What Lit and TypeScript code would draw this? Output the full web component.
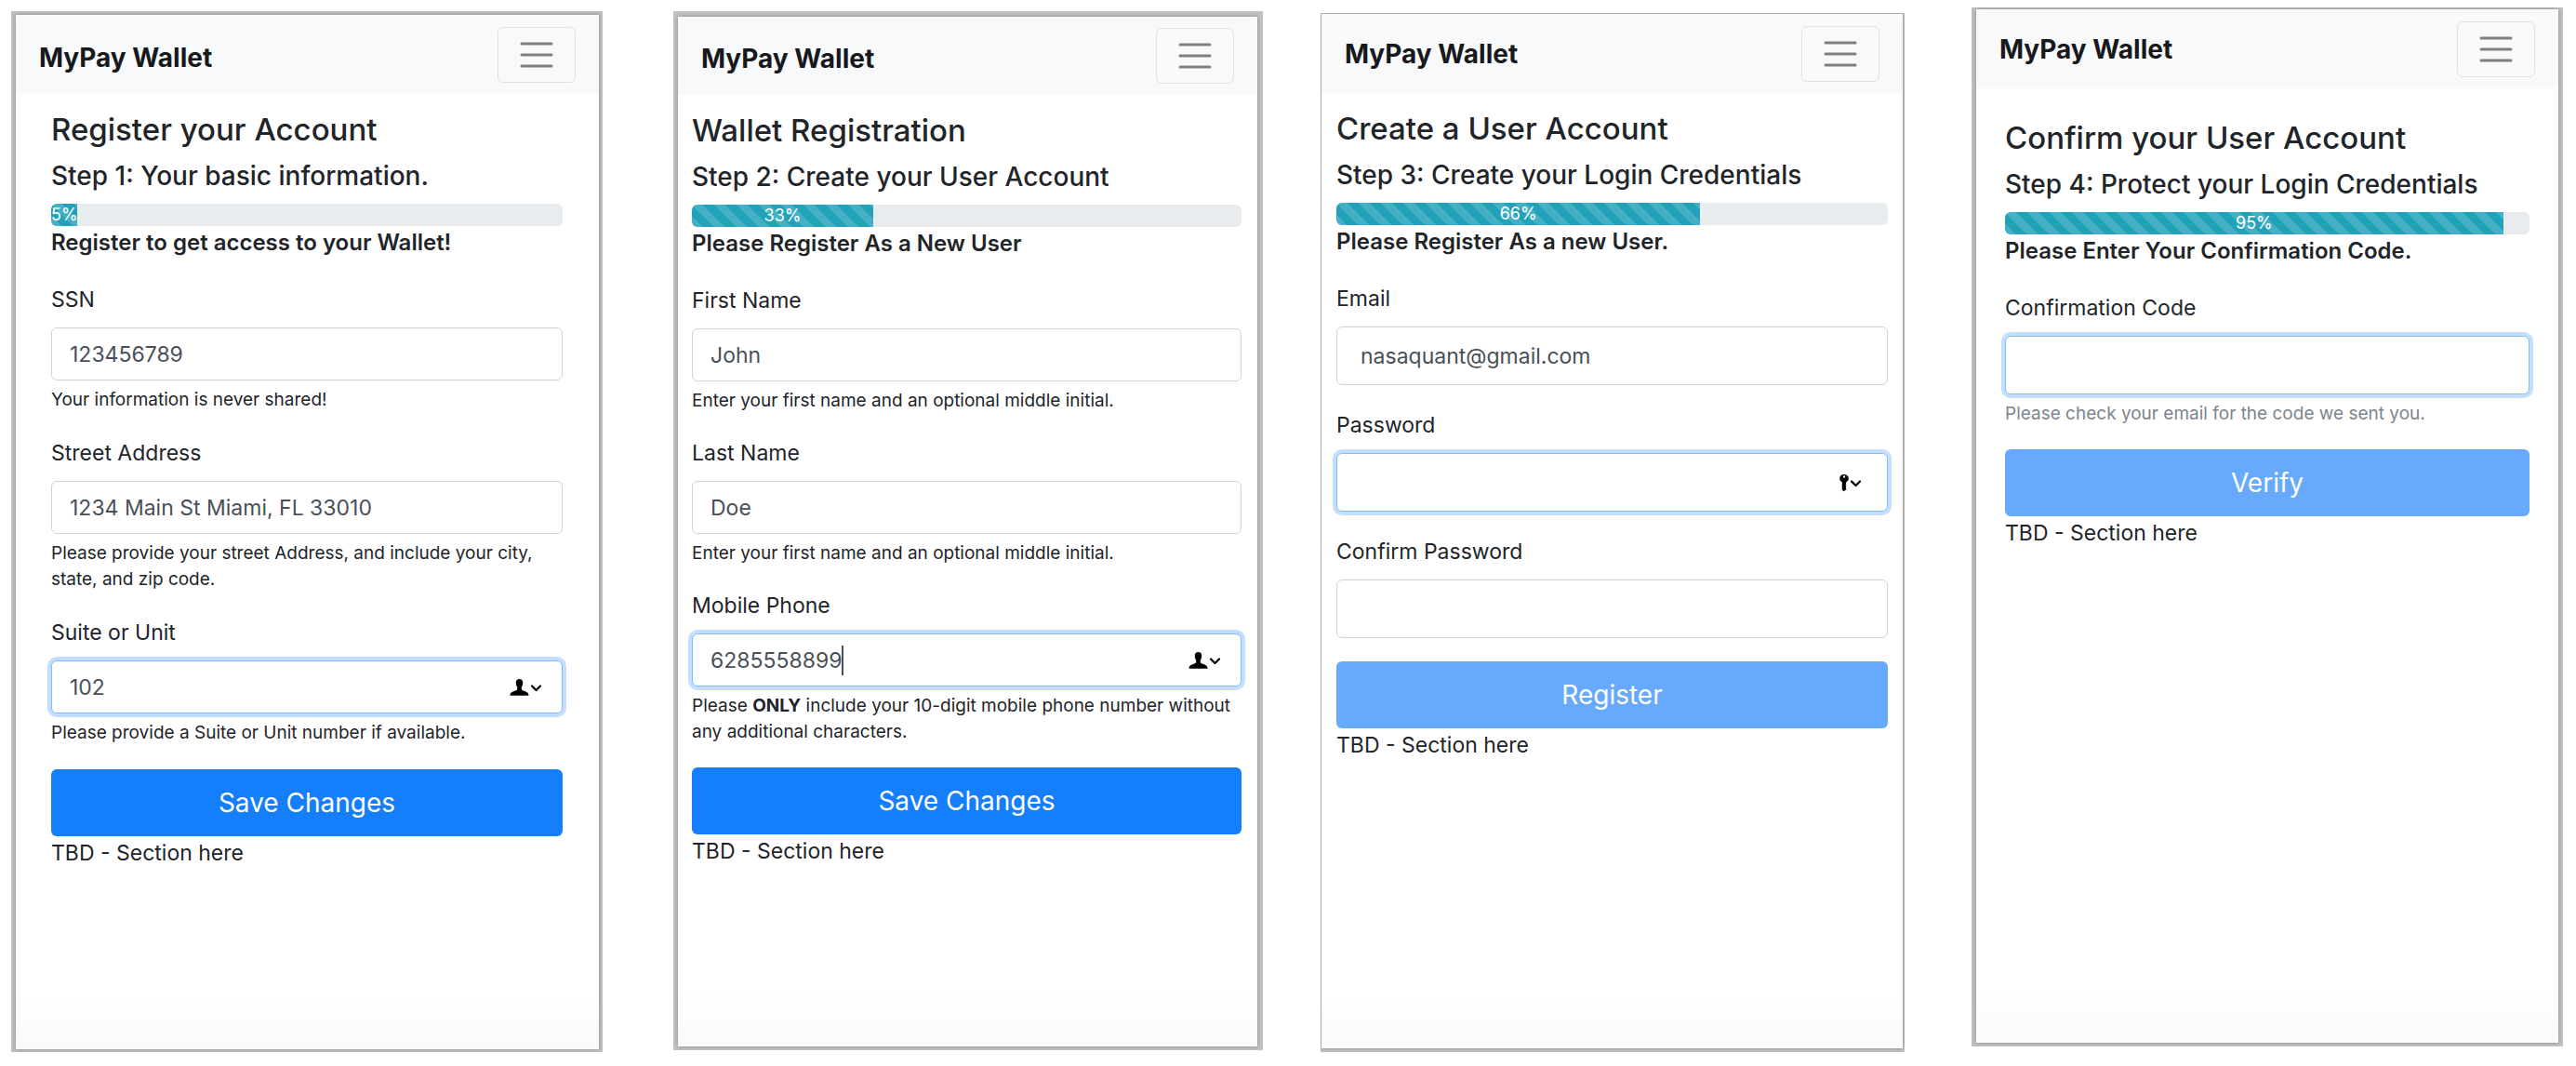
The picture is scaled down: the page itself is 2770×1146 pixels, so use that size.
import { LitElement, html, css, svg, nothing, TemplateResult } from "lit";
import { customElement, property } from "lit/decorators.js";
import { classMap } from "lit/directives/class-map.js";
import { styleMap } from "lit/directives/style-map.js";

type FieldIcon = "person" | "key";

interface Field {
  id: string;
  label: string;
  type?: string;
  value?: string;
  help?: TemplateResult | string;
  muted?: boolean;
  focused?: boolean;
  caret?: boolean;
  icon?: FieldIcon;
}

interface Step {
  name: string;
  title: string;
  step: string;
  percent: number;
  lead: string;
  fields: Field[];
  action: string;
  disabled?: boolean;
}

const STEPS: Step[] = [
  {
    name: "basics",
    title: "Register your Account",
    step: "Step 1: Your basic information.",
    percent: 5,
    lead: "Register to get access to your Wallet!",
    fields: [
      { id: "ssn", label: "SSN", value: "123456789", help: "Your information is never shared!" },
      {
        id: "street",
        label: "Street Address",
        value: "1234 Main St Miami, FL 33010",
        help: "Please provide your street Address, and include your city, state, and zip code.",
      },
      {
        id: "unit",
        label: "Suite or Unit",
        value: "102",
        help: "Please provide a Suite or Unit number if available.",
        focused: true,
        icon: "person",
      },
    ],
    action: "Save Changes",
  },
  {
    name: "user",
    title: "Wallet Registration",
    step: "Step 2: Create your User Account",
    percent: 33,
    lead: "Please Register As a New User",
    fields: [
      { id: "first", label: "First Name", value: "John", help: "Enter your first name and an optional middle initial." },
      { id: "last", label: "Last Name", value: "Doe", help: "Enter your first name and an optional middle initial." },
      {
        id: "phone",
        label: "Mobile Phone",
        type: "tel",
        value: "6285558899",
        help: html`Please <b>ONLY</b> include your 10-digit mobile phone number without any additional characters.`,
        focused: true,
        caret: true,
        icon: "person",
      },
    ],
    action: "Save Changes",
  },
  {
    name: "login",
    title: "Create a User Account",
    step: "Step 3: Create your Login Credentials",
    percent: 66,
    lead: "Please Register As a new User.",
    fields: [
      { id: "email", label: "Email", type: "email", value: "nasaquant@gmail.com" },
      { id: "password", label: "Password", type: "password", focused: true, icon: "key" },
      { id: "confirm", label: "Confirm Password", type: "password" },
    ],
    action: "Register",
    disabled: true,
  },
  {
    name: "verify",
    title: "Confirm your User Account",
    step: "Step 4: Protect your Login Credentials",
    percent: 95,
    lead: "Please Enter Your Confirmation Code.",
    fields: [
      {
        id: "code",
        label: "Confirmation Code",
        help: "Please check your email for the code we sent you.",
        muted: true,
        focused: true,
      },
    ],
    action: "Verify",
    disabled: true,
  },
];

const chevron = svg`<path d="M24 8.500l4.500 4.500l4.500-4.500" fill="none" stroke="#000" stroke-width="2.200" stroke-linecap="round" stroke-linejoin="round" />`;

const ICONS: Record<FieldIcon, TemplateResult> = {
  person: html`<svg viewBox="0 0 34 20" aria-hidden="true">
    <path d="M10.500 1C7.800 1 6.600 2.800 6.800 5.200C6.900 7.400 7.700 9.200 8.300 10.200C8.300 12.200 8 12.800 6.200 13.500C3.200 14.600 .6 15.200 .5 18.800H20.500C20.400 15.200 17.800 14.600 14.800 13.500C13 12.800 12.700 12.200 12.700 10.200C13.300 9.200 14.100 7.400 14.200 5.200C14.400 2.800 13.200 1 10.500 1Z" />
    ${chevron}
  </svg>`,
  key: html`<svg viewBox="0 0 34 20" aria-hidden="true">
    <path fill-rule="evenodd" d="M16 1C13.200 1 11.200 2.700 11.200 5.300C11.200 7.400 12.300 8.600 13.800 9.200V17.500L15.600 19.300L18.200 17.300V15.800L17.400 15L18.200 14.200V13L17.400 12.200L18.200 11.400V9.200C19.700 8.600 20.800 7.400 20.800 5.300C20.800 2.700 18.800 1 16 1ZM16 2.300A1.200 1.200 0 1 1 16 4.700A1.200 1.200 0 1 1 16 2.300Z" />
    ${chevron}
  </svg>`,
};

@customElement("wallet-screen")
export class WalletScreen extends LitElement {
  @property({ attribute: false }) data!: Step;

  static styles = css`
    :host {
      display: flex;
      box-sizing: border-box;
      overflow: hidden;
      color: #212529;
      font-family: Inter, "Liberation Sans", sans-serif;
      font-size: 23px;
      line-height: 36px;
    }
    * {
      box-sizing: border-box;
    }
    .page {
      display: flex;
      flex: 1;
      flex-direction: column;
      min-width: 0;
      background: linear-gradient(#fff calc(100% - 60px), #fafafa);
      box-shadow: 0 0 4px #85847f;
    }
    .bar {
      display: flex;
      align-items: center;
      justify-content: space-between;
      height: var(--bar-height, 85px);
      padding: 0 25px;
      background: #f8f9fa;
    }
    .brand {
      color: #17191c;
      font-size: 28px;
      font-weight: 700;
      text-decoration: none;
      padding-top: var(--brand-drop, 0);
    }
    .toggle {
      display: grid;
      place-items: center;
      width: 84px;
      height: 60px;
      padding: 0;
      border: 1px solid #dfe1e3;
      border-radius: 6px;
      background: transparent;
    }
    .toggle svg {
      width: 36px;
      height: 28px;
      stroke: #7f8081;
      stroke-width: 3;
      stroke-linecap: round;
    }
    .content {
      display: flex;
      flex-direction: column;
      padding: var(--content-padding);
    }
    h1,
    h2,
    p {
      margin: 0;
    }
    h1 {
      font-size: 33px;
      font-weight: 500;
      line-height: 44px;
    }
    h2 {
      margin-top: 10px;
      font-size: 28px;
      font-weight: 500;
    }
    .progress {
      height: 24px;
      margin-top: 12px;
      overflow: hidden;
      border-radius: 6px;
      background: #e9ecef;
    }
    .fill {
      height: 100%;
      overflow: hidden;
      color: #fff;
      font-size: 18px;
      line-height: 24px;
      text-align: center;
      background: linear-gradient(
          45deg,
          rgba(255, 255, 255, 0.15) 25%,
          transparent 25%,
          transparent 50%,
          rgba(255, 255, 255, 0.15) 50%,
          rgba(255, 255, 255, 0.15) 75%,
          transparent 75%
        )
        0 0 / 24px 24px #22a2b8;
    }
    .lead {
      font-size: 24px;
      font-weight: 600;
    }
    form {
      display: flex;
      flex-direction: column;
      gap: var(--group-gap, 24px);
      margin-top: 25px;
    }
    .group {
      display: flex;
      flex-direction: column;
    }
    .control {
      display: flex;
      align-items: center;
      height: var(--input-height, 57px);
      margin-top: 12px;
      padding: 0 var(--input-inset, 19px);
      border: 1px solid #ced4da;
      border-radius: 6px;
      background: #fff;
    }
    .control.focused {
      border-color: #80bdff;
      box-shadow: 0 0 0 4px #c3deff;
    }
    input {
      flex: 1;
      min-width: 0;
      padding: 0;
      border: 0;
      outline: 0;
      background: transparent;
      color: #495057;
      font: inherit;
    }
    .caret input {
      flex: 0 1 auto;
      field-sizing: content;
    }
    .cursor {
      width: 2px;
      height: 32px;
      margin-right: auto;
      background: #495057;
    }
    .control svg {
      flex: none;
      width: 34px;
      height: 20px;
      margin-right: 3px;
    }
    .help {
      margin-top: 7px;
      font-size: 19px;
      line-height: 28px;
    }
    .muted {
      color: #7d858d;
    }
    .submit {
      height: 72px;
      padding: 0;
      border: 0;
      border-radius: 6px;
      background: #157efb;
      color: #fff;
      font: inherit;
      font-size: 28px;
    }
    .submit:disabled {
      background: #67a9fd;
    }
  `;

  private field(f: Field) {
    return html`<div class="group">
      <label for=${f.id}>${f.label}</label>
      <div class=${classMap({ control: true, focused: !!f.focused, caret: !!f.caret })}>
        <input id=${f.id} type=${f.type ?? "text"} .value=${f.value ?? ""} autocomplete="off" />
        ${f.caret ? html`<span class="cursor"></span>` : nothing} ${f.icon ? ICONS[f.icon] : nothing}
      </div>
      ${f.help ? html`<p class=${classMap({ help: true, muted: !!f.muted })}>${f.help}</p>` : nothing}
    </div>`;
  }

  render() {
    const d = this.data;
    return html`<div class="page">
      <nav class="bar">
        <a class="brand" href="#">MyPay Wallet</a>
        <button class="toggle" type="button" aria-label="Toggle navigation">
          <svg viewBox="0 0 36 28" aria-hidden="true"><path d="M2 2H34M2 14H34M2 26H34" /></svg>
        </button>
      </nav>
      <main class="content">
        <h1>${d.title}</h1>
        <h2>${d.step}</h2>
        <div class="progress" role="progressbar" aria-valuenow=${d.percent} aria-valuemin="0" aria-valuemax="100">
          <div class="fill" style=${styleMap({ width: `${d.percent}%` })}>${d.percent}%</div>
        </div>
        <p class="lead">${d.lead}</p>
        <form @submit=${(e: Event) => e.preventDefault()}>
          ${d.fields.map((f) => this.field(f))}
          <button class="submit" type="submit" ?disabled=${!!d.disabled}>${d.action}</button>
        </form>
        <p>TBD - Section here</p>
      </main>
    </div>`;
  }
}

@customElement("app-root")
export class AppRoot extends LitElement {
  static styles = css`
    :host {
      display: grid;
      grid-template-columns: 12fr 636fr 76fr 634fr 62fr 628fr 72fr 636fr 14fr;
      min-height: 100vh;
      background: #fff;
    }
    wallet-screen {
      background: #c2c1be;
    }
    .basics {
      grid-column: 2;
      margin: 12px 0 15px;
      padding: 4px 4px 3px 5px;
      --content-padding: 16px 39px 0 38px;
      --group-gap: 25px;
      --brand-drop: 6px;
    }
    .user {
      grid-column: 4;
      margin: 12px 0 17px;
      padding: 6px 6px 4px 5px;
      --bar-height: 84px;
      --content-padding: 16px 17px 0 15px;
      --brand-drop: 6px;
    }
    .login {
      grid-column: 6;
      margin: 14px 0 15px;
      padding: 1px 2px 4px 1px;
      --content-padding: 16px 16px 0 16px;
      --group-gap: 25px;
      --input-height: 63px;
      --input-inset: 25px;
    }
    .verify {
      grid-column: 8;
      margin: 8px 0 21px;
      padding: 2px 5px 4px 5px;
      --content-padding: 31px 31px 0 31px;
      --input-height: 63px;
    }
  `;

  render() {
    return STEPS.map((s) => html`<wallet-screen class=${s.name} .data=${s}></wallet-screen>`);
  }
}
